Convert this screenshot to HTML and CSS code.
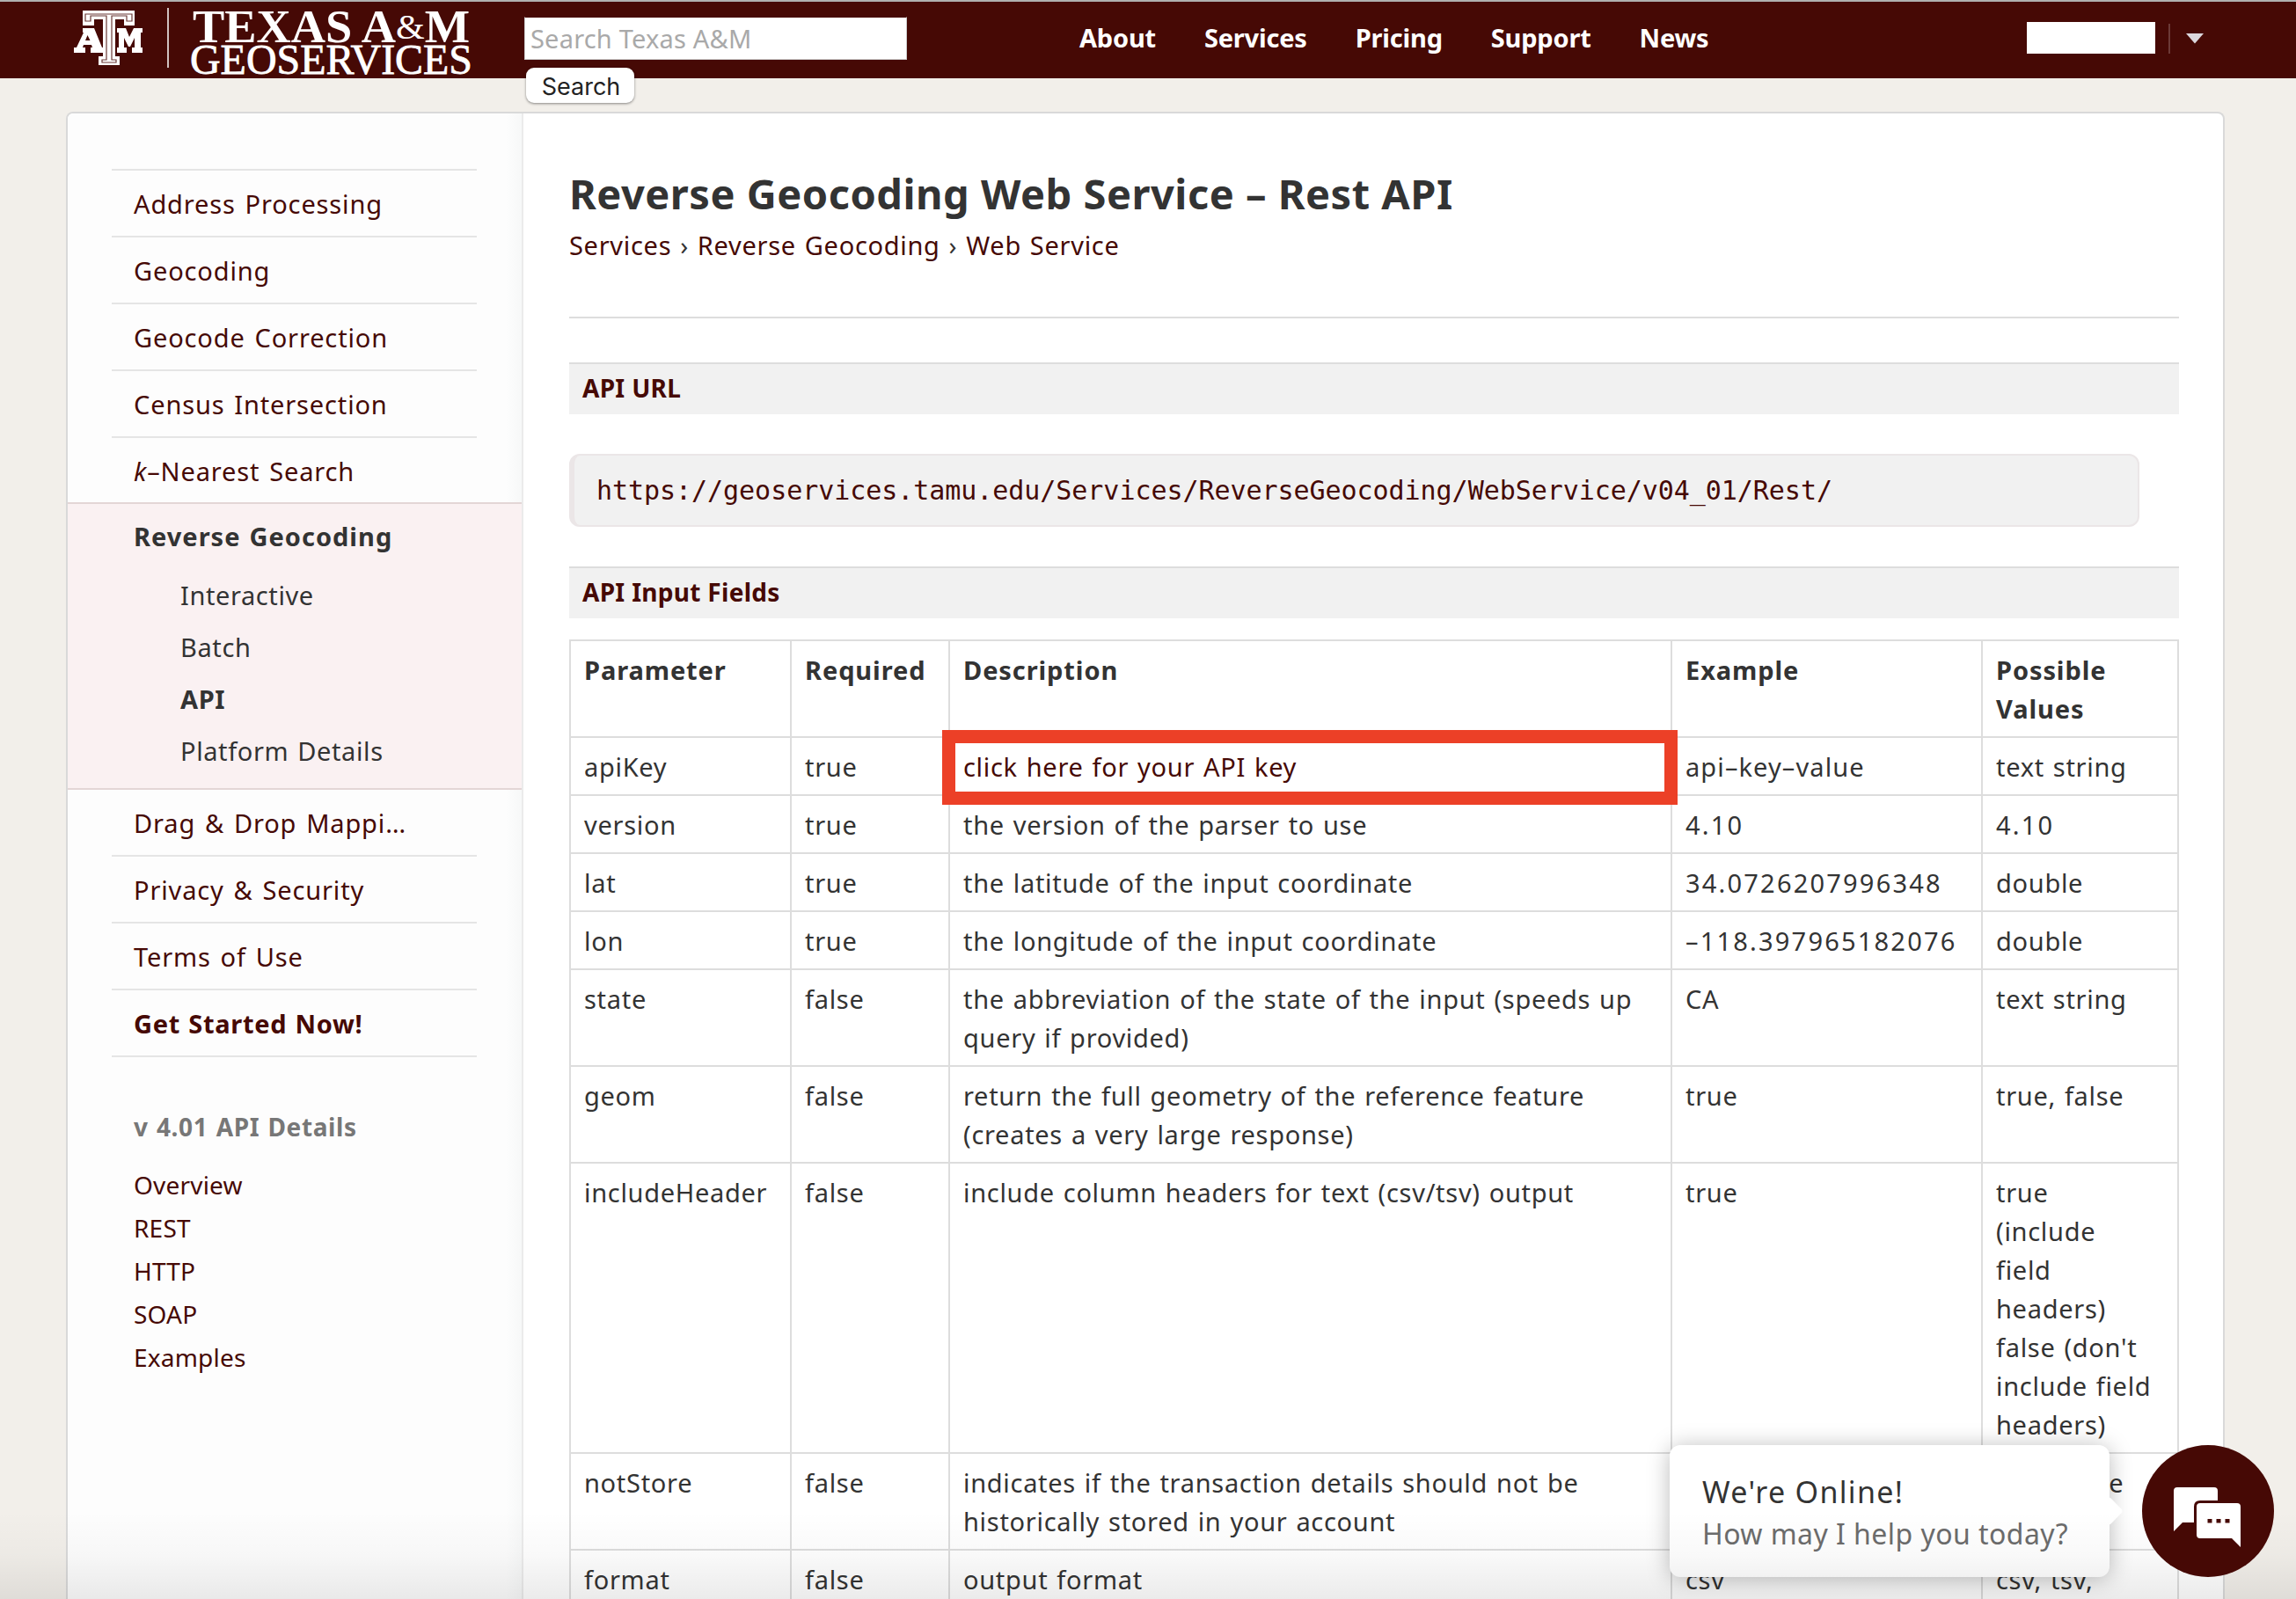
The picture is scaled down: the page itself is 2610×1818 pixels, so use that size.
FILE: index.html
```html
<!DOCTYPE html>
<html lang="en">
<head>
<meta charset="utf-8">
<title>Reverse Geocoding Web Service</title>
<link rel="stylesheet" href="styles.css">
</head>
<body>
<header class="topbar">
  <svg class="logo" width="460" height="87" viewBox="0 0 460 87">
    <g fill="#fff">
      <path d="M14 10H73V27H61V20H51V62H56V72H32V62H37V20H27V27H14Z"/>
      <path fill-rule="evenodd" d="M16 30H27L36 52H38V58H23V52H25L24 49H15L14 52H17V58H4V52H7L15 35H14V30ZM19.500 38L17 44H22.500Z"/>
      <path d="M53 30H63L67 40L72 30H82V35H80V52H82V58H70V52H73V41L68 51H66L61 41V52H64V58H53V52H55V35H53Z"/>
      <path d="M110 7H112V75H110Z" opacity=".75"/>
    </g>
    <path class="logo-inline" d="M17 14H70V22H64V16H47V66H52V69H36V66H41V16H23V22H17Z"/>
    <g class="logo-text">
      <text x="139" y="45.500" font-size="53" font-weight="700" textLength="315" lengthAdjust="spacingAndGlyphs">TEXAS A<tspan font-size="41" font-weight="400" dy="-4">&amp;</tspan><tspan dy="4">M</tspan></text>
      <text class="logo-light" x="136" y="82" font-size="48" textLength="321" lengthAdjust="spacingAndGlyphs">GEOSERVICES</text>
    </g>
  </svg>
  <form class="search">
    <div class="search-field">Search Texas A&amp;M</div>
    <button class="search-button" type="button">Search</button>
  </form>
  <nav class="nav">
    <a>About</a><a>Services</a><a>Pricing</a><a>Support</a><a>News</a>
  </nav>
  <div class="account">
    <span class="account-name"></span>
    <span class="account-toggle"><svg width="20" height="12" viewBox="0 0 20 12"><path d="M0 0H20L10 11.500Z" fill="#dcd8de"/></svg></span>
  </div>
</header>
<div class="page">
  <aside class="sidebar">
    <ul class="menu">
      <li>Address Processing</li>
      <li>Geocoding</li>
      <li>Geocode Correction</li>
      <li>Census Intersection</li>
      <li class="last"><span><i>k</i>–Nearest Search</span></li>
    </ul>
    <div class="active">
      <div class="active-title">Reverse Geocoding</div>
      <div class="sub">Interactive</div>
      <div class="sub">Batch</div>
      <div class="sub current">API</div>
      <div class="sub">Platform Details</div>
    </div>
    <ul class="menu lower">
      <li>Drag &amp; Drop Mappi<span class="dots">…</span></li>
      <li>Privacy &amp; Security</li>
      <li>Terms of Use</li>
      <li class="strong">Get Started Now!</li>
    </ul>
    <div class="details">
      <div class="details-title">v 4.01 API Details</div>
      <a>Overview</a><a>REST</a><a>HTTP</a><a>SOAP</a><a>Examples</a>
    </div>
  </aside>
  <main class="main">
    <h1>Reverse Geocoding Web Service – Rest API</h1>
    <div class="crumbs"><a>Services</a> › <a>Reverse Geocoding</a> › <a>Web Service</a></div>
    <hr>
    <h2>API URL</h2>
    <pre class="url">https://geoservices.tamu.edu/Services/ReverseGeocoding/WebService/v04_01/Rest/</pre>
    <h2>API Input Fields</h2>
    <table>
      <colgroup><col class="c1"><col class="c2"><col class="c3"><col class="c4"><col class="c5"></colgroup>
      <tr><th>Parameter</th><th>Required</th><th>Description</th><th>Example</th><th>Possible<br>Values</th></tr>
      <tr><td>apiKey</td><td>true</td><td class="marked"><a>click here for your API key</a><div class="highlight"></div></td><td class="dashed">api–key–value</td><td>text string</td></tr>
      <tr><td>version</td><td>true</td><td>the version of the parser to use</td><td class="number">4.10</td><td class="number">4.10</td></tr>
      <tr><td>lat</td><td>true</td><td>the latitude of the input coordinate</td><td class="number">34.0726207996348</td><td>double</td></tr>
      <tr><td>lon</td><td>true</td><td>the longitude of the input coordinate</td><td class="number">–118.397965182076</td><td>double</td></tr>
      <tr><td>state</td><td>false</td><td>the abbreviation of the state of the input (speeds up<br>query if provided)</td><td>CA</td><td>text string</td></tr>
      <tr><td>geom</td><td>false</td><td>return the full geometry of the reference feature<br>(creates a very large response)</td><td>true</td><td>true, false</td></tr>
      <tr><td>includeHeader</td><td>false</td><td>include column headers for text (csv/tsv) output</td><td>true</td><td>true<br>(include<br>field<br>headers)<br>false (don't<br>include field<br>headers)</td></tr>
      <tr><td>notStore</td><td>false</td><td>indicates if the transaction details should not be<br>historically stored in your account</td><td></td><td>true, false</td></tr>
      <tr><td>format</td><td>false</td><td>output format</td><td>csv</td><td>csv, tsv,</td></tr>
    </table>
  </main>
</div>
<div class="chat-bubble">
  <div class="chat-title">We're Online!</div>
  <div class="chat-text">How may I help you today?</div>
</div>
<div class="bottom-shade"></div>
<div class="chat-button">
  <svg width="150" height="150" viewBox="0 0 150 150">
    <path fill="#fff" d="M40 48H82Q86 48 86 52V63H66Q59 63 59 70V88H46L36 98V52Q36 48 40 48Z"/>
    <path fill="#fff" d="M66 66H108Q112 66 112 70V116L102 106H66Q62 106 62 102V70Q62 66 66 66Z"/>
    <path fill="#460905" d="M74.500 84H79.500V88.500H74.500ZM84.500 84H89.500V88.500H84.500ZM94.500 84H99.500V88.500H94.500Z"/>
  </svg>
</div>
</body>
</html>
```
FILE: styles.css
```css
* { box-sizing: border-box; }
html, body { margin: 0; height: 1818px; overflow: hidden; }
body {
  background: #f2efea;
  color: #333;
  font-family: "Noto Sans", "Open Sans", sans-serif;
  font-size: 29px;
  line-height: 44px;
}
a { color: #460905; }

.topbar {
  display: flex;
  align-items: flex-start;
  height: 89px;
  border-top: 2px solid #b0b0b0;
  background: #460905;
  padding-left: 80px;
  position: relative;
  z-index: 2;
}
.logo { flex: none; overflow: visible; }
.logo-inline { fill: none; stroke: #460905; stroke-width: 1.2; opacity: .8; }
.logo-text { fill: #fff; font-family: "Liberation Serif", serif; }
.logo-light { stroke: #fff; stroke-width: .8; }
.search { margin: 17px 0 0 56px; width: 435px; flex: none; }
.search-field {
  height: 49px;
  background: #fff;
  border: 1px solid #ccc;
  border-top-color: #460905;
  color: #a9a9a9;
  padding-left: 6px;
  line-height: 47px;
  letter-spacing: .2px;
}
.search-button {
  display: block;
  margin: 9px 0 0 2px;
  width: 123px;
  height: 40px;
  border: 0;
  border-radius: 9px;
  background: #fff;
  box-shadow: 0 1px 3px rgba(0, 0, 0, .45);
  color: #222;
  font: 27px/40px Inter, sans-serif;
  padding: 2px 0 0 2px;
}
.nav { display: flex; gap: 55px; margin: 19px 0 0 196px; flex: none; }
.nav a { color: #fff; font-weight: 700; letter-spacing: -.2px; }
.account { display: flex; margin: 23px 0 0 auto; width: 306px; }
.account-name { width: 146px; height: 36px; background: #fff; }
.account-toggle {
  margin: 2px 0 0 15px;
  height: 34px;
  border-left: 2px solid #6b3936;
  padding-left: 18px;
  display: flex;
  align-items: flex-start;
}
.account-toggle svg { margin-top: 11px; }

.page {
  display: flex;
  margin: 38px 0 0 75px;
  width: 2454px;
  height: 1691px;
  border: 2px solid #d9d9d9;
  border-bottom: 0;
  border-radius: 8px 8px 0 0;
  background: #fff;
  overflow: hidden;
}
.sidebar {
  flex: none;
  width: 518px;
  border-right: 2px solid #ebebeb;
  padding-top: 63px;
  background: linear-gradient(to left, #f7f8f8, #fdfdfd 18px);
  color: #460905;
}
.menu { list-style: none; margin: 0; padding: 0 51px 0 50px; }
.menu li {
  height: 76px;
  border-top: 2px solid #e5e5e5;
  padding: 16px 0 0 25px;
  white-space: nowrap;
  letter-spacing: .85px;
  word-spacing: 2.5px;
}
.menu .last { height: 75px; }
.active {
  height: 327px;
  border-top: 2px solid #e3d6d6;
  border-bottom: 2px solid #e3d6d6;
  background: #faf1f2;
  color: #333;
  padding: 15px 0 0 75px;
}
.active-title { font-weight: 700; height: 67px; letter-spacing: 1px; word-spacing: 1.5px; }
.sub { height: 59px; padding-left: 53px; letter-spacing: .6px; word-spacing: 2px; }
.current, .strong { font-weight: 700; }
.menu .strong { letter-spacing: .7px; word-spacing: 1px; }
.lower li { border-top: 0; border-bottom: 2px solid #e5e5e5; }
.dots { letter-spacing: 0; }
.details { padding: 55px 0 0 75px; }
.details-title {
  color: #777;
  font-weight: 700;
  height: 66px;
  line-height: 48px;
  font-size: 28px;
  letter-spacing: .6px;
  word-spacing: 1.5px;
}
.details a { display: block; height: 49px; line-height: 49px; font-size: 28px; letter-spacing: .2px; }

.main { width: 1830px; margin-left: 52px; flex: none; padding-top: 65px; }
h1 { margin: 0; font-size: 47px; line-height: 52px; white-space: nowrap; letter-spacing: .5px; }
.crumbs { margin-top: 11px; letter-spacing: .7px; word-spacing: 1.7px; }
hr { height: 2px; border: 0; background: #ddd; margin: 59px 0 50px; }
h2 {
  margin: 0;
  height: 59px;
  border-top: 2px solid #ddd;
  background: #f1f1f1;
  color: #460905;
  font-size: 28px;
  line-height: 55px;
  letter-spacing: .3px;
  padding-left: 15px;
}
.url {
  margin: 45px 0;
  width: 1785px;
  height: 83px;
  border: 2px solid #ebe6e7;
  border-left-width: 6px;
  border-radius: 12px;
  background: #f1f1f1;
  color: #460905;
  font: 30px/79px "DejaVu Sans Mono", monospace;
  letter-spacing: -.05px;
  padding-left: 25px;
}
table {
  margin-top: 24px;
  width: 1830px;
  table-layout: fixed;
  border-collapse: separate;
  border-spacing: 0;
  border-top: 2px solid #ddd;
  border-left: 2px solid #ddd;
}
.c1 { width: 251px; }
.c2 { width: 180px; }
.c3 { width: 821px; }
.c4 { width: 353px; }
.c5 { width: 223px; }
th, td {
  border-right: 2px solid #ddd;
  border-bottom: 2px solid #ddd;
  padding: 11px 0 9px 15px;
  text-align: left;
  vertical-align: top;
  white-space: nowrap;
  letter-spacing: .7px;
  word-spacing: 1.7px;
}
th { letter-spacing: .9px; }
.number { letter-spacing: 2.2px; }
.dashed { letter-spacing: 1.1px; }
.marked { position: relative; }
.highlight {
  position: absolute;
  left: -9px;
  top: -9px;
  width: 836px;
  height: 85px;
  border: 15px solid #ec4027;
}

.chat-bubble {
  position: absolute;
  left: 1898px;
  top: 1643px;
  width: 500px;
  height: 150px;
  border-radius: 12px;
  background: #fff;
  box-shadow: 0 2px 26px rgba(0, 0, 0, .27);
  padding: 30px 0 0 37px;
  white-space: nowrap;
}
.chat-bubble::after {
  content: "";
  position: absolute;
  left: 487px;
  top: 63px;
  width: 24px;
  height: 24px;
  border-radius: 4px;
  background: #fff;
  transform: rotate(45deg);
}
.chat-title { font-size: 34px; line-height: 47px; letter-spacing: 1.3px; }
.chat-text { font-size: 32px; line-height: 47px; color: #6c6c6c; letter-spacing: .45px; }
.bottom-shade {
  position: absolute;
  left: 0;
  right: 0;
  top: 1718px;
  height: 100px;
  background: linear-gradient(rgba(0, 0, 0, 0), rgba(0, 0, 0, .025) 50%, rgba(0, 0, 0, .08));
}
.chat-button {
  position: absolute;
  left: 2435px;
  top: 1643px;
  width: 150px;
  height: 150px;
  border-radius: 50%;
  background: #460905;
}
```
